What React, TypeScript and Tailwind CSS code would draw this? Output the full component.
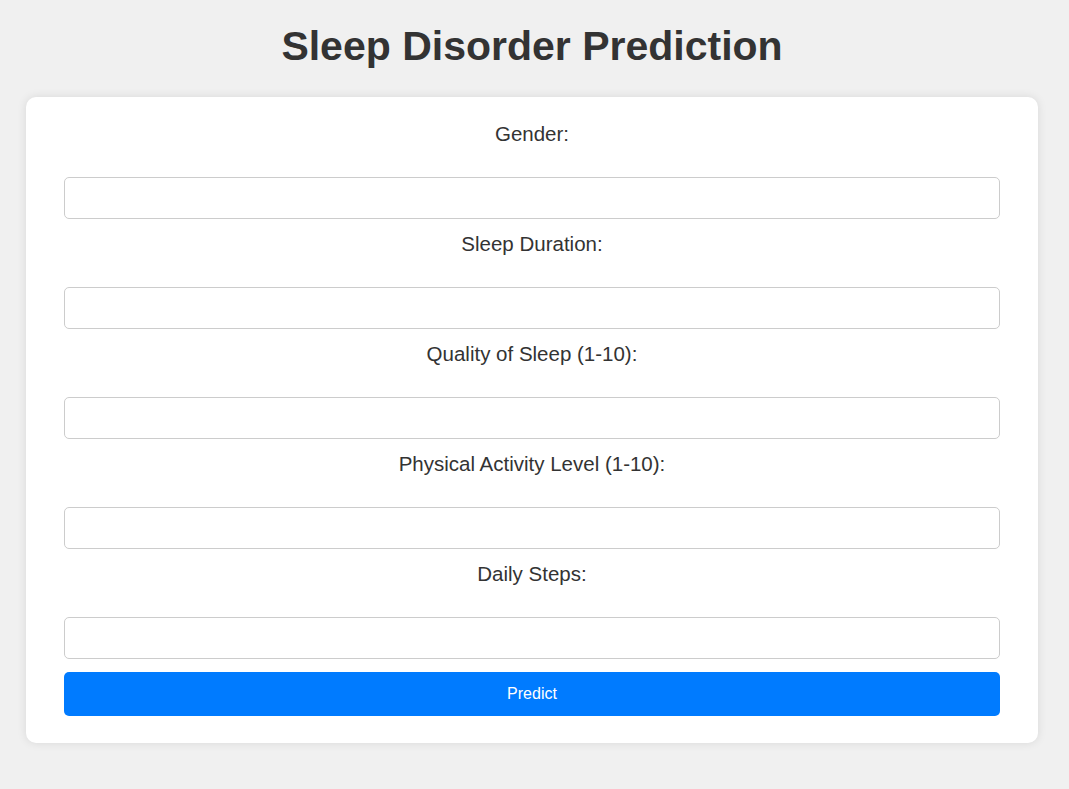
import { useState } from "react";

const fields = [
  { name: "gender", label: "Gender:" },
  { name: "sleep_duration", label: "Sleep Duration:" },
  { name: "quality", label: "Quality of Sleep (1-10):" },
  { name: "activity", label: "Physical Activity Level (1-10):" },
  { name: "steps", label: "Daily Steps:" },
];

export default function App() {
  const [values, setValues] = useState<Record<string, string>>({});

  const handleSubmit = (e: React.FormEvent) => {
    e.preventDefault();
  };

  return (
    <div className="min-h-screen bg-[#f0f0f0] pl-[26px] pt-[20px] pb-[46px] font-['Liberation_Sans',Arial,sans-serif] text-[#333]">
      <h1 className="w-[1012px] text-center text-[41px] font-bold leading-[52px] mb-[25px]">Sleep Disorder Prediction</h1>
      <form
        onSubmit={handleSubmit}
        className="w-[1012px] bg-white rounded-[10px] shadow-[0_0_10px_rgba(0,0,0,0.1)] px-[38px] pt-[12px] pb-[27px]"
      >
        {fields.map((f) => (
          <div key={f.name}>
            <label className="block text-center text-[20.5px] leading-[22px] mt-[14px] mb-[32px]">{f.label}</label>
            <input
              type="text"
              value={values[f.name] ?? ""}
              onChange={(e) => setValues({ ...values, [f.name]: e.target.value })}
              className="block w-full h-[42px] border border-[#ccc] rounded-[5px] px-[10px] text-[16px]"
            />
          </div>
        ))}
        <button type="submit" className="w-full h-[44px] mt-[13px] bg-[#007bff] text-white text-[16px] rounded-[5px]">
          Predict
        </button>
      </form>
    </div>
  );
}
